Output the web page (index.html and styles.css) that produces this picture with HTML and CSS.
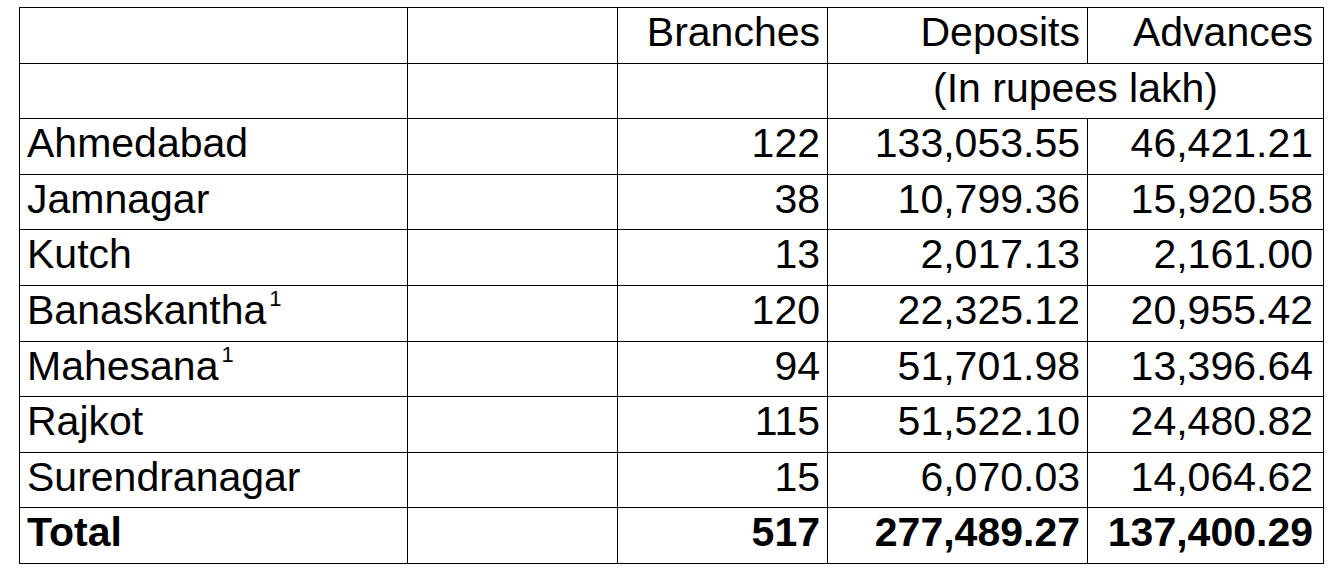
FILE: index.html
```html
<!DOCTYPE html>
<html>
<head>
<meta charset="utf-8">
<link rel="stylesheet" href="styles.css">
</head>
<body>
<table class="sheet">
  <colgroup>
    <col class="c-name"><col class="c-blank"><col class="c-br"><col class="c-dep"><col class="c-adv">
  </colgroup>
  <tr>
    <td></td><td></td><td class="num">Branches</td><td class="num">Deposits</td><td class="num last">Advances</td>
  </tr>
  <tr>
    <td></td><td></td><td></td><td class="unit" colspan="2">(In rupees lakh)</td>
  </tr>
  <tr><td>Ahmedabad</td><td></td><td class="num">122</td><td class="num">133,053.55</td><td class="num last">46,421.21</td></tr>
  <tr><td>Jamnagar</td><td></td><td class="num">38</td><td class="num">10,799.36</td><td class="num last">15,920.58</td></tr>
  <tr><td>Kutch</td><td></td><td class="num">13</td><td class="num">2,017.13</td><td class="num last">2,161.00</td></tr>
  <tr><td>Banaskantha<sup class="fn">1</sup></td><td></td><td class="num">120</td><td class="num">22,325.12</td><td class="num last">20,955.42</td></tr>
  <tr><td>Mahesana<sup class="fn">1</sup></td><td></td><td class="num">94</td><td class="num">51,701.98</td><td class="num last">13,396.64</td></tr>
  <tr><td>Rajkot</td><td></td><td class="num">115</td><td class="num">51,522.10</td><td class="num last">24,480.82</td></tr>
  <tr><td>Surendranagar</td><td></td><td class="num">15</td><td class="num">6,070.03</td><td class="num last">14,064.62</td></tr>
  <tr class="total"><td>Total</td><td></td><td class="num">517</td><td class="num">277,489.27</td><td class="num last">137,400.29</td></tr>
</table>
</body>
</html>
```
FILE: styles.css
```css
html, body {
  margin: 0;
  padding: 0;
  background: #fff;
}
body {
  padding: 7px 0 0 19px;
  font-family: "Liberation Sans", Arial, sans-serif;
  color: #000;
}
.sheet {
  border-collapse: collapse;
  table-layout: fixed;
  width: 1304px;
  font-size: 41px;
}
.c-name { width: 388px; }
.c-blank { width: 210px; }
.c-br { width: 210px; }
.c-dep { width: 260px; }
.c-adv { width: 236px; }
.sheet tr {
  height: 55.6px;
}
.sheet td {
  border: 1px solid #000;
  padding: 1px 7px 0 7px;
  line-height: 47px;
  vertical-align: top;
  white-space: nowrap;
  overflow: visible;
}
.sheet td.num {
  text-align: right;
}
.sheet td.last {
  padding-right: 10px;
}
.sheet td.unit {
  text-align: center;
}
.total td {
  font-weight: bold;
}
.fn {
  font-size: 22px;
  line-height: 0;
  vertical-align: 18px;
  margin-left: 3px;
}
```
